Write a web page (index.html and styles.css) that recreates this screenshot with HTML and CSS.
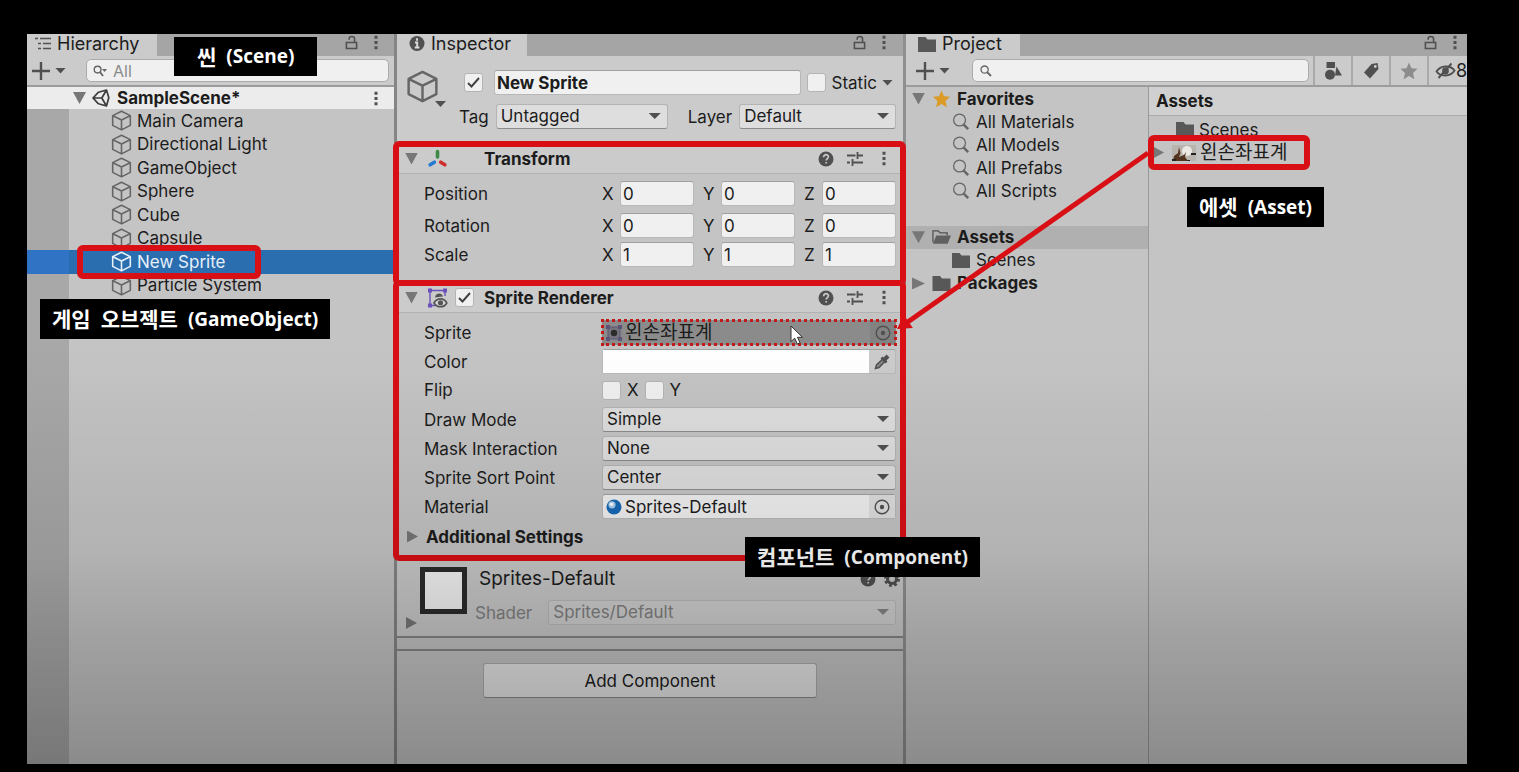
FILE: index.html
```html
<!DOCTYPE html>
<html lang="ko">
<head>
<meta charset="utf-8">
<title>Unity Editor</title>
<link rel="stylesheet" href="styles.css">
</head>
<body>
<svg class="defs" aria-hidden="true">
  <symbol id="cube" viewBox="0 0 20 20"><path d="M10 1.2 18.4 5.4V14.6L10 18.9 1.6 14.6V5.4ZM1.8 5.5 10 9.5 18.2 5.5M10 9.5V18.6" fill="none" stroke="currentColor" stroke-width="1.5" stroke-linejoin="round"/></symbol>
  <symbol id="lock" viewBox="0 0 14 16"><path d="M1.5 8H12.5V14.5H1.5ZM4.5 5V3.5C4.5 1 10.3 .6 10.3 4V8" fill="none" stroke="currentColor" stroke-width="1.7"/></symbol>
  <symbol id="dots" viewBox="0 0 4 16"><path d="M.4 .8H3.6V4H.4ZM.4 6.4H3.6V9.6H.4ZM.4 12H3.6V15.2H.4Z" fill="currentColor"/></symbol>
  <symbol id="plus" viewBox="0 0 18 18"><path d="M9 0V18M0 9H18" stroke="currentColor" stroke-width="2.4"/></symbol>
  <symbol id="search" viewBox="0 0 20 20"><circle cx="8.4" cy="7.8" r="6.6" fill="none" stroke="currentColor" stroke-width="1.4"/><path d="M13 13 18 18" stroke="currentColor" stroke-width="2.8"/></symbol>
  <symbol id="folder" viewBox="0 0 18 15"><path d="M0 0H7.5L9.5 2.5H18V15H0Z" fill="currentColor"/></symbol>
  <symbol id="help" viewBox="0 0 16 16"><circle cx="8" cy="8" r="7.5" fill="#505050"/><path d="M5.6 6.2C5.6 2.8 10.6 3 10.4 6 10.3 7.6 8.2 7.6 8.2 9.6M8.2 10.9V12.6" fill="none" stroke="#c8c8c8" stroke-width="1.7"/></symbol>
  <symbol id="sliders" viewBox="0 0 16 16"><path d="M0 4.5H8.5M10.500 4.5H16M10.5 1V8M0 11.5H3M5.500 11.5H16M5.5 8V15" fill="none" stroke="currentColor" stroke-width="1.8"/></symbol>
  <symbol id="target" viewBox="0 0 16 16"><circle cx="8" cy="8" r="6.8" fill="none" stroke="currentColor" stroke-width="1.4"/><circle cx="8" cy="8" r="2.2" fill="currentColor"/></symbol>
  <symbol id="star" viewBox="0 0 18 18"><path d="M9 .5 11.5 6.2 17.6 6.8 13 10.9 14.4 17.2 9 13.9 3.6 17.2 5 10.9 .4 6.8 6.5 6.2Z" fill="currentColor"/></symbol>
</svg>

<main class="editor">
  <section class="panel hierarchy">
    <header class="tabs">
      <h2 class="tab"><svg class="tab-icon" viewBox="0 0 16 16"><path d="M0 2.500H3M5 2.500H16M3 7.500H6M8 7.500H16M3 12.500H6M8 12.500H16" stroke="#505050" stroke-width="1.7"/></svg>Hierarchy</h2>
      <button class="icon-btn push" aria-label="Lock"><svg class="lock"><use href="#lock"/></svg></button>
      <button class="icon-btn" aria-label="Menu"><svg class="dots"><use href="#dots"/></svg></button>
    </header>
    <div class="toolbar">
      <button class="icon-btn add" aria-label="Create"><svg class="plus"><use href="#plus"/></svg><i class="caret"></i></button>
      <label class="search"><svg viewBox="0 0 14 12"><circle cx="4.6" cy="4.6" r="3.4" fill="none" stroke="#666" stroke-width="1.4"/><path d="M7 7 10 11" stroke="#666" stroke-width="1.8"/><path d="M9 4H14L11.500 7Z" fill="#666"/></svg><input type="text" placeholder="All" aria-label="Search hierarchy"></label>
    </div>
    <div class="scene-row">
      <i class="fold open"></i>
      <svg class="unity" viewBox="0 0 18 18"><path d="M6.500 3.200 1 9 6.500 14.800M6.500 3.200 14.500 1 16.800 8.800 14.500 17 6.500 14.800M1 9H9.800M9.800 9 14.500 1M9.800 9 14.500 17" fill="none" stroke="#3c3c3c" stroke-width="1.700" stroke-linejoin="round"/></svg>
      <strong>SampleScene*</strong>
      <button class="icon-btn push" aria-label="Scene menu"><svg class="dots"><use href="#dots"/></svg></button>
    </div>
    <div class="scene-body">
      <ul class="objects">
        <li><svg><use href="#cube"/></svg>Main Camera</li>
        <li><svg><use href="#cube"/></svg>Directional Light</li>
        <li><svg><use href="#cube"/></svg>GameObject</li>
        <li><svg><use href="#cube"/></svg>Sphere</li>
        <li><svg><use href="#cube"/></svg>Cube</li>
        <li><svg><use href="#cube"/></svg>Capsule</li>
        <li class="selected"><svg><use href="#cube"/></svg>New Sprite<span class="mark mark-object"></span></li>
        <li><svg><use href="#cube"/></svg>Particle System</li>
      </ul>
    </div>
    <p class="note note-scene"><b>씬</b> <span>(Scene)</span></p>
    <p class="note note-object"><b>게임</b> <b>오브젝트</b> <span>(GameObject)</span></p>
  </section>

  <section class="panel inspector">
    <header class="tabs">
      <h2 class="tab"><svg class="tab-icon" viewBox="0 0 16 16"><circle cx="8" cy="7.500" r="7.500" fill="#505050"/><path d="M8 2.300V4.700M6 6.500H8.200V11.500M5.800 11.500H10.400" fill="none" stroke="#ddd" stroke-width="1.900"/></svg>Inspector</h2>
      <button class="icon-btn push" aria-label="Lock"><svg class="lock"><use href="#lock"/></svg></button>
      <button class="icon-btn" aria-label="Menu"><svg class="dots"><use href="#dots"/></svg></button>
    </header>
    <div class="object-head">
      <div class="object-icon"><svg><use href="#cube"/></svg><i class="caret"></i></div>
      <div class="object-lines">
        <div class="line">
          <input class="check" type="checkbox" checked aria-label="Active">
          <input class="field name" type="text" value="New Sprite" aria-label="Name">
          <label class="static"><input class="check" type="checkbox">Static</label><i class="caret"></i>
        </div>
        <div class="line tags">
          <label for="tag">Tag</label>
          <span class="select tag"><select id="tag"><option>Untagged</option></select></span>
          <label for="layer">Layer</label>
          <span class="select layer"><select id="layer"><option>Default</option></select></span>
        </div>
      </div>
    </div>

    <section class="component transform">
      <header class="comp-head">
        <i class="fold open"></i>
        <svg class="comp-icon" viewBox="0 0 20 18"><g fill="none" stroke-width="3.400" stroke-linecap="round"><path d="M10 2V7" stroke="#3b8a45"/><path d="M3 14.500 7 12" stroke="#2479d0"/><path d="M13 12 17 14.500" stroke="#cf2f2a"/></g></svg>
        <span class="check-space"></span>
        <h3>Transform</h3>
        <button class="icon-btn push" aria-label="Help"><svg><use href="#help"/></svg></button>
        <button class="icon-btn" aria-label="Presets"><svg><use href="#sliders"/></svg></button>
        <button class="icon-btn" aria-label="Menu"><svg class="dots"><use href="#dots"/></svg></button>
      </header>
      <div class="props">
        <div class="prop wide"><span>Position</span><div class="xyz"><label>X<input class="field" value="0"></label><label>Y<input class="field" value="0"></label><label>Z<input class="field" value="0"></label></div></div>
        <div class="prop"><span>Rotation</span><div class="xyz"><label>X<input class="field" value="0"></label><label>Y<input class="field" value="0"></label><label>Z<input class="field" value="0"></label></div></div>
        <div class="prop"><span>Scale</span><div class="xyz"><label>X<input class="field" value="1"></label><label>Y<input class="field" value="1"></label><label>Z<input class="field" value="1"></label></div></div>
      </div>
      <span class="mark mark-component"></span>
    </section>

    <section class="component renderer">
      <header class="comp-head">
        <i class="fold open"></i>
        <svg class="comp-icon" viewBox="0 0 20 20"><path d="M2.500 2.500H17.500V8M2.500 2.500V17.500H8" fill="none" stroke="#6a50b8" stroke-width="1.400"/><path d="M.5 .5H4.500V4.500H.5ZM15.500 .5H19.500V4.500H15.500ZM.5 15.500H4.500V19.500H.5Z" fill="#6a50b8"/><path d="M7.500 9.500C8 4.500 14.500 4.500 15.500 8.500L11 9Z" fill="#555"/><path d="M6.500 15C9.500 9.500 16.500 9.500 19.300 15 16.500 20 9.500 20 6.500 15Z" fill="#d8d8d8" stroke="#555" stroke-width="1.700"/><circle cx="13" cy="14.800" r="2.600" fill="#555"/></svg>
        <input class="check" type="checkbox" checked aria-label="Sprite Renderer enabled">
        <h3>Sprite Renderer</h3>
        <button class="icon-btn push" aria-label="Help"><svg><use href="#help"/></svg></button>
        <button class="icon-btn" aria-label="Presets"><svg><use href="#sliders"/></svg></button>
        <button class="icon-btn" aria-label="Menu"><svg class="dots"><use href="#dots"/></svg></button>
      </header>
      <div class="props">
        <div class="prop"><span>Sprite</span>
          <div class="object-field drop"><svg viewBox="0 0 16 16"><path d="M2 2H14V14H2Z" fill="#74747c" stroke="#5d5578"/><path d="M0 0H4V4H0ZM12 0H16V4H12ZM0 12H4V16H0ZM12 12H16V16H12Z" fill="#5d5578"/><circle cx="8" cy="8" r="3.200" fill="#2c2c2c"/></svg><span>왼손좌표계</span><button class="icon-btn picker" aria-label="Select sprite"><svg><use href="#target"/></svg></button>
            <svg class="cursor" viewBox="0 0 14 20"><path d="M1 1V16.500L4.700 13.200 7.300 19 10 17.800 7.500 12.300H12.500Z" fill="#fff" stroke="#333"/></svg></div>
        </div>
        <div class="prop"><label for="color">Color</label><div class="color"><input id="color" type="color" value="#ffffff"><button class="icon-btn" aria-label="Pick colour"><svg viewBox="0 0 16 16"><path d="M1.500 14.500 2.500 11 8.500 5.300 10.800 7.500 5 13.500Z" fill="#8a8a8a" stroke="#505050" stroke-width="1.500"/><path d="M7.500 3.500 12.500 8.500" stroke="#505050" stroke-width="2.600"/><path d="M9.500 6.500 14 2" stroke="#505050" stroke-width="4"/></svg></button></div></div>
        <div class="prop"><span>Flip</span><div class="flip"><label><input class="check" type="checkbox">X</label><label><input class="check" type="checkbox">Y</label></div></div>
        <div class="prop"><label for="mode">Draw Mode</label><span class="select"><select id="mode"><option>Simple</option></select></span></div>
        <div class="prop"><label for="mask">Mask Interaction</label><span class="select"><select id="mask"><option>None</option></select></span></div>
        <div class="prop"><label for="sort">Sprite Sort Point</label><span class="select"><select id="sort"><option>Center</option></select></span></div>
        <div class="prop"><span>Material</span><div class="object-field"><svg viewBox="0 0 16 16"><circle cx="8" cy="8" r="7.500" fill="#1769b5"/><circle cx="6" cy="5.800" r="3.600" fill="#a9cdee"/><circle cx="5.500" cy="5.200" r="1.800" fill="#fff"/></svg><span>Sprites-Default</span><button class="icon-btn picker" aria-label="Select material"><svg><use href="#target"/></svg></button></div></div>
      </div>
      <h4 class="more"><i class="fold"></i>Additional Settings</h4>
      <span class="mark mark-component"></span>
    </section>

    <section class="material">
      <div class="preview"><span class="swatch"></span><i class="fold"></i></div>
      <div class="mat-body">
        <div class="mat-title"><h3>Sprites-Default</h3>
          <button class="icon-btn push" aria-label="Help"><svg><use href="#help"/></svg></button>
          <button class="icon-btn" aria-label="Settings"><svg viewBox="0 0 16 16"><circle cx="8" cy="8" r="4.500" fill="none" stroke="#505050" stroke-width="3"/><circle cx="8" cy="8" r="6.500" fill="none" stroke="#505050" stroke-width="3" stroke-dasharray="2.600 2.505"/></svg></button>
        </div>
        <div class="shader"><label for="shader">Shader</label><span class="select"><select id="shader" disabled><option>Sprites/Default</option></select></span></div>
      </div>
    </section>
    <div class="strip"></div>
    <button class="add-component">Add Component</button>
    <p class="note note-component"><b>컴포넌트</b> <span>(Component)</span></p>
  </section>

  <section class="panel project">
    <header class="tabs">
      <h2 class="tab"><svg class="folder"><use href="#folder"/></svg>Project</h2>
      <button class="icon-btn push" aria-label="Lock"><svg class="lock"><use href="#lock"/></svg></button>
      <button class="icon-btn" aria-label="Menu"><svg class="dots"><use href="#dots"/></svg></button>
    </header>
    <div class="toolbar">
      <button class="icon-btn add" aria-label="Create"><svg class="plus"><use href="#plus"/></svg><i class="caret"></i></button>
      <label class="search"><svg viewBox="0 0 12 12"><circle cx="4.600" cy="4.600" r="3.600" fill="none" stroke="#666" stroke-width="1.300"/><path d="M7 7 11 11" stroke="#666" stroke-width="1.800"/></svg><input type="text" aria-label="Search project"></label>
      <div class="filters">
        <button aria-label="Filter by type"><svg viewBox="0 0 18 18"><path d="M2.500 0H11V6H2.500ZM12.500 4.500 18 13.500H11Z" fill="#505050"/><circle cx="6" cy="12.800" r="5" fill="#505050"/></svg></button>
        <button aria-label="Filter by label"><svg viewBox="0 0 18 18"><path d="M9.500 2 15.500 1 16.500 7 8 16.500 2 10.500Z" fill="#505050"/><circle cx="13.300" cy="4.500" r="1.400" fill="#ccc"/></svg></button>
        <button class="fav" aria-label="Favorites"><svg><use href="#star"/></svg></button>
        <button class="hidden-count"><svg viewBox="0 0 20 18"><path d="M1 9.500C5 3 15 3 19 8.500 15 15 5 15 1 9.500ZM3 16 16 1.500" fill="none" stroke="#505050" stroke-width="1.900"/><circle cx="10" cy="9" r="3.400" fill="#505050"/></svg>8</button>
      </div>
    </div>
    <div class="browser">
      <nav class="tree">
        <ul>
          <li class="root"><i class="fold open"></i><svg class="gold"><use href="#star"/></svg>Favorites</li>
          <li class="leaf"><svg class="lens"><use href="#search"/></svg>All Materials</li>
          <li class="leaf"><svg class="lens"><use href="#search"/></svg>All Models</li>
          <li class="leaf"><svg class="lens"><use href="#search"/></svg>All Prefabs</li>
          <li class="leaf"><svg class="lens"><use href="#search"/></svg>All Scripts</li>
          <li></li>
          <li class="root current"><i class="fold open"></i><svg viewBox="0 0 20 15"><path d="M1 13V1H6.500L8.500 3.200H16V6" fill="none" stroke="#505050" stroke-width="1.300"/><path d="M4.500 6H20L16.500 14.500H1Z" fill="#606060"/></svg>Assets</li>
          <li class="leaf"><svg class="folder"><use href="#folder"/></svg>Scenes</li>
          <li class="root"><i class="fold"></i><svg class="folder"><use href="#folder"/></svg>Packages</li>
        </ul>
        <svg class="arrow" viewBox="0 0 256 184" preserveAspectRatio="none"><path d="M254 6 9 177" stroke="#d90f16" stroke-width="5"/><path d="M1 182 8 168 17 181Z" fill="#d90f16"/></svg>
      </nav>
      <div class="files">
        <h3>Assets</h3>
        <ul>
          <li><i class="fold none"></i><svg class="folder"><use href="#folder"/></svg>Scenes</li>
          <li><i class="fold"></i><svg class="thumb" viewBox="0 0 24 16"><path d="M0 0H24V16H0Z" fill="#b9b4ae"/><circle cx="15" cy="6" r="5" fill="#ece9e5"/><path d="M1 16 2 11 6 8 7 2 8.500 8 7 12 12 10 14 7 13 12 16 16Z" fill="#54331f"/><path d="M0 14H4V16H0ZM19 8H24V10H19ZM15 15H18V16H15Z" fill="#222"/></svg>왼손좌표계<span class="mark mark-asset"></span></li>
        </ul>
        <p class="note note-asset"><b>에셋</b> <span>(Asset)</span></p>
      </div>
    </div>
  </section>
</main>
</body>
</html>
```
FILE: styles.css
```css
* { box-sizing: border-box; }

body {
  margin: 0;
  padding: 34px 52px 8px 27px;
  background: #000;
  color: #1c1c1c;
  font: 17px/22px Inter, "Noto Sans CJK KR", sans-serif;
}

h2, h3, h4, p, ul { margin: 0; padding: 0; font-size: inherit; list-style: none; }
button, input, select { font: inherit; color: inherit; margin: 0; border: 0; padding: 0; }
svg { flex: none; width: 16px; height: 16px; }
.defs { position: absolute; width: 0; height: 0; }

.editor {
  position: relative;
  display: grid;
  grid-template-columns: minmax(0, 367fr) minmax(0, 509fr) minmax(0, 564fr);
  min-height: calc(100vh - 42px);
}
.editor::after {
  content: "";
  position: absolute;
  inset: 0;
  z-index: 5;
  pointer-events: none;
  background: linear-gradient(rgba(0,0,0,0) 43%, rgba(0,0,0,.09) 71%, rgba(0,0,0,.18) 83%, rgba(0,0,0,.29));
}

.panel { position: relative; display: flex; flex-direction: column; background: #c4c4c4; }
.inspector, .project { border-left: 3px solid #858585; }
.project { border-left-color: #8f8f8f; }

/* tabs and toolbars */
.tabs { display: flex; align-items: center; height: 22px; padding-right: 16px; background: #a5a5a5; }
.tab {
  display: flex; align-items: center; gap: 6px;
  height: 22px; padding: 0 18px 2px 8px;
  background: #cbcbcb; font-weight: 400; font-size: 18px;
}
.inspector .tab, .project .tab { padding-left: 12px; }
.inspector .tab { padding-right: 16px; }
.tab-icon { width: 16px; height: 16px; }
.folder { width: 18px; height: 15px; color: #585858; }
.icon-btn { display: flex; align-items: center; background: none; color: #505050; }
.push { margin-left: auto; }
.lock { width: 13px; height: 15px; }
.dots { width: 4px; height: 15px; }
.tabs .icon-btn { padding-bottom: 6px; }
.tabs .push + .icon-btn { margin-left: 16px; }
.inspector .tabs { padding-right: 17px; }
.project .tabs { padding-right: 10px; }

.toolbar {
  display: flex; align-items: center; gap: 20px;
  height: 31px; padding: 0 5px;
  background: #cbcbcb; border-bottom: 2px solid #9c9c9c;
}
.add { gap: 5px; }
.plus { width: 18px; height: 18px; }
.caret { flex: none; width: 11px; height: 6px; background: #505050; clip-path: polygon(0 0, 100% 0, 50% 100%); }
.search {
  display: flex; align-items: center; flex: 1; gap: 6px; min-width: 0;
  height: 23px; padding: 0 6px;
  background: #f0f0f0; border: 1px solid #ababab; border-radius: 5px;
}
.search svg { width: 14px; height: 12px; }
.search input { flex: 1; min-width: 0; background: none; outline: 0; font-size: 16px; }
.search input::placeholder { color: #8a8a8a; opacity: 1; }

/* hierarchy */
.fold { flex: none; width: 11px; height: 12px; background: #777; clip-path: polygon(0 0, 100% 50%, 0 100%); }
.fold.open { width: 13px; height: 12px; clip-path: polygon(0 0, 100% 0, 50% 100%); }
.fold.none { visibility: hidden; }
.scene-row {
  display: flex; align-items: center; gap: 6px;
  height: 22px; padding: 0 16px 0 46px; background: #ececec;
}
.scene-row strong { font-weight: 700; margin-left: 1px; }
.unity { width: 18px; height: 18px; }
.scene-body { flex: 1; background: linear-gradient(90deg, #a8a8a8 42px, transparent 42px); }
.objects { display: grid; grid-auto-rows: 1fr; height: 188px; }
.objects li { position: relative; display: flex; align-items: center; gap: 5px; padding-left: 84px; }
.objects svg { width: 21px; height: 21px; color: #666; }
.objects .selected { z-index: 1; background: linear-gradient(90deg, #3072c4 42px, #2a6eb0 42px); color: #e8f0f8; }
.objects .selected svg { color: #e8f0f8; }

/* inspector */
.field, .select select, .object-field, .color {
  width: 100%; height: 25px; background: #f0f0f0;
  border: 1px solid #b8b8b8; border-top-color: #a0a0a0; border-radius: 3px;
}
.field { min-width: 0; padding: 0 2px; }
.select { position: relative; display: block; min-width: 0; }
.select select { display: block; appearance: none; padding: 0 20px 2px 4px; background: #dedede; border-color: #b4b4b4 #b4b4b4 #8c8c8c; opacity: 1; }
.select::after {
  content: ""; position: absolute; right: 7px; top: 9px; width: 12px; height: 6px;
  background: #505050; clip-path: polygon(0 0, 100% 0, 50% 100%); pointer-events: none;
}
.check {
  appearance: none; flex: none; width: 19px; height: 19px;
  background: #f0f0f0 center / 15px 15px no-repeat; border: 1px solid #b4b4b4; border-radius: 3px;
}
.check:checked { background-image: url("data:image/svg+xml,%3Csvg xmlns='http://www.w3.org/2000/svg' viewBox='0 0 15 15'%3E%3Cpath d='M2 8 5.500 11.500 13 3' fill='none' stroke='%23404040' stroke-width='1.900'/%3E%3C/svg%3E"); }

.object-head { display: flex; gap: 18px; height: 88px; padding: 14px 7px 0 9px; background: #cbcbcb; }
.object-icon { display: flex; flex-direction: column; width: 40px; }
.object-icon svg { width: 33px; height: 33px; color: #666; }
.object-icon .caret { align-self: flex-end; margin-top: -2px; }
.object-lines { flex: 1; display: flex; flex-direction: column; gap: 9px; min-width: 0; }
.line { display: flex; align-items: center; }
.line .name { flex: 1; margin: 0 6px 0 11px; font-weight: 700; }
.static { display: flex; align-items: center; gap: 6px; }
.line .caret { margin: 0 3px 0 5px; }
.tags { gap: 7px; }
.tags .tag { flex: 170; margin-right: 13px; }
.tags .layer { flex: 155; }
.tags label:first-child { margin-left: -5px; }

.component { position: relative; }
.comp-head {
  display: flex; align-items: center; gap: 9px;
  height: 30px; padding: 0 17px 0 8px;
  background: #cbcbcb; border-bottom: 1px solid #b2b2b2;
}
.comp-icon { width: 21px; height: 20px; }
.comp-head .check, .check-space { flex: none; width: 19px; margin-left: -2px; }
.comp-head h3 { margin-left: 1px; }
.comp-head .icon-btn + .icon-btn { margin-left: 4px; }
.comp-head .icon-btn:last-child { margin-left: 10px; }
h3, h4 { font-weight: 700; }

.props { display: grid; gap: 5px; padding: 7px 7px 0 27px; }
.prop { display: grid; grid-template-columns: 178fr 294fr; align-items: center; height: 24px; }
.prop.wide { margin-bottom: 3px; }
.xyz { display: grid; grid-template-columns: repeat(3, minmax(0, 1fr)); gap: 9px; }
.xyz label { display: grid; grid-template-columns: 18px minmax(0, 1fr); align-items: center; }
.transform { height: 139px; }
.renderer { padding-bottom: 3px; }

.object-field { position: relative; display: flex; align-items: center; gap: 3px; padding-left: 3px; }
.object-field .picker { width: 26px; height: 23px; justify-content: center; margin-left: auto; background: #dedede; }
.drop { background: #8b8b8b; font-size: 19px; border: 0; padding-left: 4px; }
.drop::after { content: ""; position: absolute; inset: -1px; border: 3px dotted #c01a1a; }
.drop .picker { background: #828282; }
.cursor { position: absolute; left: 64%; top: 5px; z-index: 1; width: 14px; height: 20px; }
.color { display: flex; background: #cbcbcb; }
.color input { flex: 1; min-width: 0; height: 23px; appearance: none; background: none; }
.color input::-webkit-color-swatch-wrapper { padding: 0; }
.color input::-webkit-color-swatch { border: 0; }
.color .icon-btn { width: 26px; justify-content: center; }
.flip { display: flex; gap: 6px; }
.flip label { display: flex; align-items: center; gap: 6px; }
.more { display: flex; align-items: center; gap: 8px; height: 37px; padding-left: 10px; }

.material { display: flex; gap: 8px; height: 80px; padding: 9px 7px 0 9px; background: #c9c9c9; border-bottom: 2px solid #868686; }
.preview { width: 61px; display: flex; flex-direction: column; align-items: flex-end; }
.swatch { width: 47px; height: 47px; background: #f4f4f4; border: 5px solid #2b2b2b; }
.preview .fold { align-self: flex-start; margin-top: 3px; }
.mat-body { flex: 1; min-width: 0; }
.mat-title { display: flex; align-items: center; gap: 8px; height: 24px; margin-left: 4px; font-size: 19px; }
.mat-title h3 { font-weight: 400; }
.mat-title .icon-btn:last-child { margin-right: -4px; }
.shader { display: flex; align-items: center; gap: 16px; margin-top: 9px; color: #808080; }
.shader .select { flex: 1; }
.shader .select select { background: #d0d0d0; border-color: #bababa; }
.shader .select::after { background: #858585; }
.strip { height: 13px; background: #c4c4c4; border-bottom: 2px solid #868686; }
.add-component {
  width: 66%; height: 35px; margin: 12px auto 0;
  background: #e6e6e6; border: 1px solid #aaa; border-bottom-color: #888; border-radius: 3px;
}

/* project */
.project .toolbar { gap: 22px; padding: 0 0 0 10px; }
.filters { display: flex; height: 29px; margin-left: -18px; overflow: hidden; }
.filters button { display: flex; align-items: center; justify-content: center; width: 38px; background: none; border-left: 2px solid #aaa; color: #222; }
.filters svg { width: 18px; height: 18px; }
.filters .fav { color: #8c8c8c; }
.filters .hidden-count { width: 40px; justify-content: flex-start; padding-left: 6px; font-size: 18px; }
.hidden-count svg { width: 21px; }
.browser { flex: 1; display: grid; grid-template-columns: 243fr 318fr; }
.tree { position: relative; border-right: 1px solid #999; }
.tree ul { display: grid; grid-auto-rows: 1fr; height: 208px; }
.tree li { display: flex; align-items: center; }
.tree .root { gap: 6px; padding-left: 6px; font-weight: 700; }
.tree .root svg { width: 19px; }
.root .fold { margin-right: 1px; }
.tree .root .fold { width: 13px; }
.tree .leaf { gap: 6px; padding-left: 46px; }
.tree .current { background: #b0b0b0; }
.gold { color: #dc9a26; height: 18px; }
.lens { width: 18px; height: 18px; color: #666; }
.arrow { position: absolute; z-index: 3; left: -10px; top: 60px; width: calc(100% + 12px); height: 184px; }
.files { position: relative; min-width: 0; }
.files h3 { height: 29px; padding: 3px 7px; background: #d0d0d0; border-bottom: 1px solid #aaa; }
.files ul { padding-top: 2px; }
.files li { position: relative; display: flex; align-items: center; gap: 6px; height: 23px; padding-left: 4px; }
.files li .folder { margin: 0 -1px 0 6px; }
.files .thumb { width: 24px; height: 16px; margin: 0 -2px 0 2px; }
.files li:last-child { font-size: 19px; }

/* annotations */
.mark { position: absolute; z-index: 2; border: 6px solid #d90f16; border-radius: 6px; pointer-events: none; }
.mark-object { left: 50px; top: -5px; width: 184px; height: 34px; }
.mark-component { inset: -3px -3px -3px -4px; }
.mark-asset { left: -1px; top: -6px; width: 162px; height: 35px; }
.note {
  position: absolute; z-index: 4; display: flex; gap: 10px; padding: 0 12px;
  background: #000; color: #fff; white-space: nowrap;
  font: 700 19px/40px "Open Sans", "Noto Sans CJK KR", sans-serif;
}
.note b { font: 700 21px/38px "Noto Sans CJK KR", sans-serif; }
.note-scene { left: 147px; top: 3px; padding: 0 23px; line-height: 39px; }
.note-object { left: 13px; top: 265px; }
.note-component { right: -77px; top: 503px; }
.note-asset { left: 38px; top: 100px; }
```
